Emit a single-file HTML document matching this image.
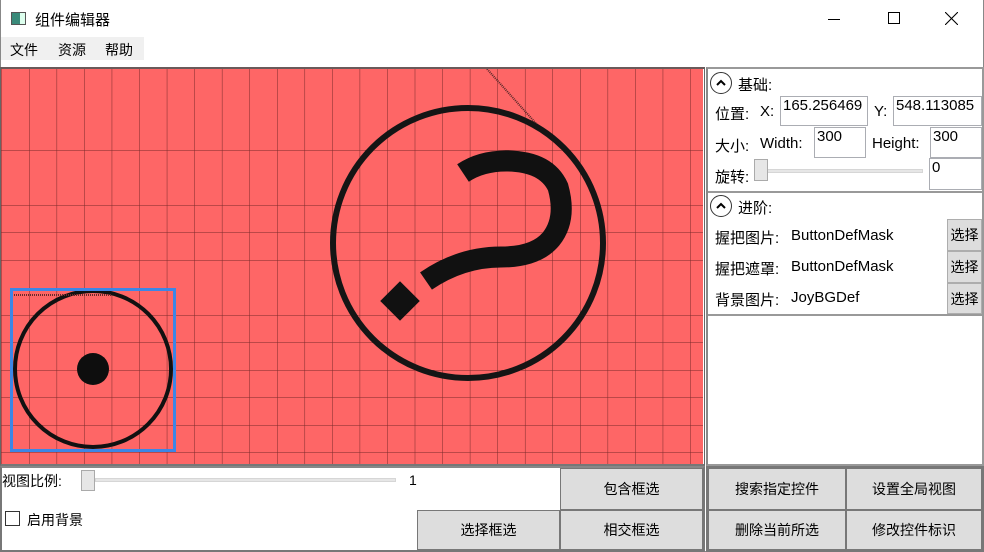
<!DOCTYPE html>
<html><head><meta charset="utf-8"><style>
*{margin:0;padding:0;box-sizing:border-box}
body{width:984px;height:552px;position:relative;background:#fff;font-family:"Liberation Sans","Noto Sans CJK SC",sans-serif;font-size:14px;color:#000;overflow:hidden}
.a{position:absolute;white-space:nowrap}
.r{font-size:15px}
.btn{position:absolute;background:#dddddd;border:1px solid #adadad;display:flex;align-items:center;justify-content:center;font-size:14px}
.tb{position:absolute;border:1px solid #abadb3;background:#fff;padding:0 2px;font-size:15px;line-height:18px}
.circ{position:absolute;width:22px;height:22px;border:1.5px solid #333;border-radius:50%}
</style></head><body>
<div class="a" style="left:0;top:0;width:984px;height:552px;border:1px solid #888;border-top:none"></div>
<div class="a" style="left:11px;top:12px;width:15px;height:13px;border:1px solid #555;background:linear-gradient(90deg,#3a8a7a 0 60%,#dfe 60%)"></div>
<div class="a" style="left:35px;top:9px;font-size:15px">组件编辑器</div>
<div class="a" style="left:828px;top:19px;width:12px;height:1px;background:#000"></div>
<div class="a" style="left:888px;top:12px;width:12px;height:12px;border:1px solid #000"></div>
<svg class="a" style="left:945px;top:12px" width="13" height="13"><path d="M0 0L13 13M13 0L0 13" stroke="#000" stroke-width="1.1"/></svg>
<div class="a" style="left:1px;top:37px;width:143px;height:23px;background:#f0f0f0"></div>
<div class="a" style="left:10px;top:40px">文件</div>
<div class="a" style="left:58px;top:40px">资源</div>
<div class="a" style="left:105px;top:40px">帮助</div>
<div class="a" style="left:0;top:67px;width:705px;height:399px;border:1px solid #666;border-top:2px solid #6a5a5a;border-bottom:2px solid #777"></div>
<svg class="a" style="left:1px;top:69px" width="702" height="395">
<defs><pattern id="g" x="0.5" y="-1.5" width="27.55" height="27.5" patternUnits="userSpaceOnUse"><path d="M0 0V27.5M0 0H27.55" stroke="#7a2a2a" stroke-width="1" fill="none"/></pattern></defs>
<rect width="702" height="395" fill="#fe6666"/>
<rect width="702" height="395" fill="url(#g)"/>
<line x1="486" y1="0" x2="540" y2="60" stroke="#5a2a2a" stroke-width="2" stroke-dasharray="1 1"/>
<circle cx="467" cy="174" r="135" fill="none" stroke="#151515" stroke-width="6"/>
<path d="M462 104 Q480 92 505 92 Q545 92 557 118 Q566 150 550 170 Q535 188 500 188 Q460 188 425 212" fill="none" stroke="#111" stroke-width="21"/>
<rect x="385" y="218" width="28" height="28" fill="#111" transform="rotate(45 399 232)"/>
<circle cx="92" cy="300" r="78" fill="none" stroke="#111" stroke-width="4"/>
<circle cx="92" cy="300" r="16" fill="#0e0e0e"/>
<line x1="13" y1="226" x2="110" y2="226" stroke="#6a2a2a" stroke-width="2" stroke-dasharray="1 1"/>
<rect x="10.5" y="220.5" width="163" height="161" fill="none" stroke="#3d86e6" stroke-width="3"/>
</svg>
<div class="a" style="left:706px;top:67px;width:278px;height:399px;border:2px solid #999;border-left:2px solid #888"></div>
<div class="a" style="left:708px;top:191px;width:274px;height:2px;background:#999"></div>
<div class="a" style="left:708px;top:314px;width:274px;height:2px;background:#999"></div>
<div class="circ" style="left:710px;top:72px"></div>
<svg class="a" style="left:715px;top:78px" width="12" height="10"><path d="M2 7L6 3L10 7" stroke="#000" stroke-width="2" fill="none"/></svg>
<div class="a r" style="left:738px;top:74px">基础:</div>
<div class="a r" style="left:715px;top:103px">位置:</div>
<div class="a r" style="left:760px;top:103px">X:</div>
<div class="tb" style="left:780px;top:96px;width:88px;height:30px">165.256469</div>
<div class="a r" style="left:874px;top:103px">Y:</div>
<div class="tb" style="left:893px;top:96px;width:89px;height:30px">548.113085</div>
<div class="a r" style="left:715px;top:135px">大小:</div>
<div class="a r" style="left:760px;top:135px">Width:</div>
<div class="tb" style="left:814px;top:127px;width:52px;height:31px">300</div>
<div class="a r" style="left:872px;top:135px">Height:</div>
<div class="tb" style="left:930px;top:127px;width:52px;height:31px">300</div>
<div class="a r" style="left:715px;top:166px">旋转:</div>
<div class="a" style="left:760px;top:169px;width:163px;height:4px;background:#e6e6e6;border:1px solid #d6d6d6"></div>
<div class="a" style="left:754px;top:159px;width:14px;height:22px;background:#e6e6e6;border:1px solid #aaa"></div>
<div class="tb" style="left:929px;top:158px;width:53px;height:32px">0</div>
<div class="circ" style="left:710px;top:195px"></div>
<svg class="a" style="left:715px;top:201px" width="12" height="10"><path d="M2 7L6 3L10 7" stroke="#000" stroke-width="2" fill="none"/></svg>
<div class="a r" style="left:738px;top:197px">进阶:</div>
<div class="a r" style="left:715px;top:227px">握把图片:</div>
<div class="a r" style="left:791px;top:227px">ButtonDefMask</div>
<div class="btn r" style="left:947px;top:219px;width:35px;height:32px">选择</div>
<div class="a r" style="left:715px;top:258px">握把遮罩:</div>
<div class="a r" style="left:791px;top:258px">ButtonDefMask</div>
<div class="btn r" style="left:947px;top:251px;width:35px;height:32px">选择</div>
<div class="a r" style="left:715px;top:289px">背景图片:</div>
<div class="a r" style="left:791px;top:289px">JoyBGDef</div>
<div class="btn r" style="left:947px;top:283px;width:35px;height:31px">选择</div>
<div class="a" style="left:0;top:466px;width:705px;height:86px;border:2px solid #777;border-top:2px solid #888"></div>
<div class="a" style="left:2px;top:471px">视图比例:</div>
<div class="a" style="left:95px;top:478px;width:301px;height:4px;background:#e6e6e6;border:1px solid #d6d6d6"></div>
<div class="a" style="left:81px;top:470px;width:14px;height:21px;background:#e6e6e6;border:1px solid #aaa"></div>
<div class="a" style="left:409px;top:472px">1</div>
<div class="a" style="left:5px;top:511px;width:15px;height:15px;border:1px solid #333;background:#fff"></div>
<div class="a" style="left:27px;top:510px">启用背景</div>
<div class="btn" style="left:560px;top:468px;width:143px;height:42px;border-color:#777">包含框选</div>
<div class="btn" style="left:417px;top:510px;width:143px;height:40px;border-color:#777">选择框选</div>
<div class="btn" style="left:560px;top:510px;width:143px;height:40px;border-color:#777">相交框选</div>
<div class="a" style="left:706px;top:466px;width:278px;height:86px;border:2px solid #777"></div>
<div class="btn" style="left:708px;top:468px;width:138px;height:42px;border-color:#777">搜索指定控件</div>
<div class="btn" style="left:846px;top:468px;width:136px;height:42px;border-color:#777">设置全局视图</div>
<div class="btn" style="left:708px;top:510px;width:138px;height:40px;border-color:#777">删除当前所选</div>
<div class="btn" style="left:846px;top:510px;width:136px;height:40px;border-color:#777">修改控件标识</div>
</body></html>
